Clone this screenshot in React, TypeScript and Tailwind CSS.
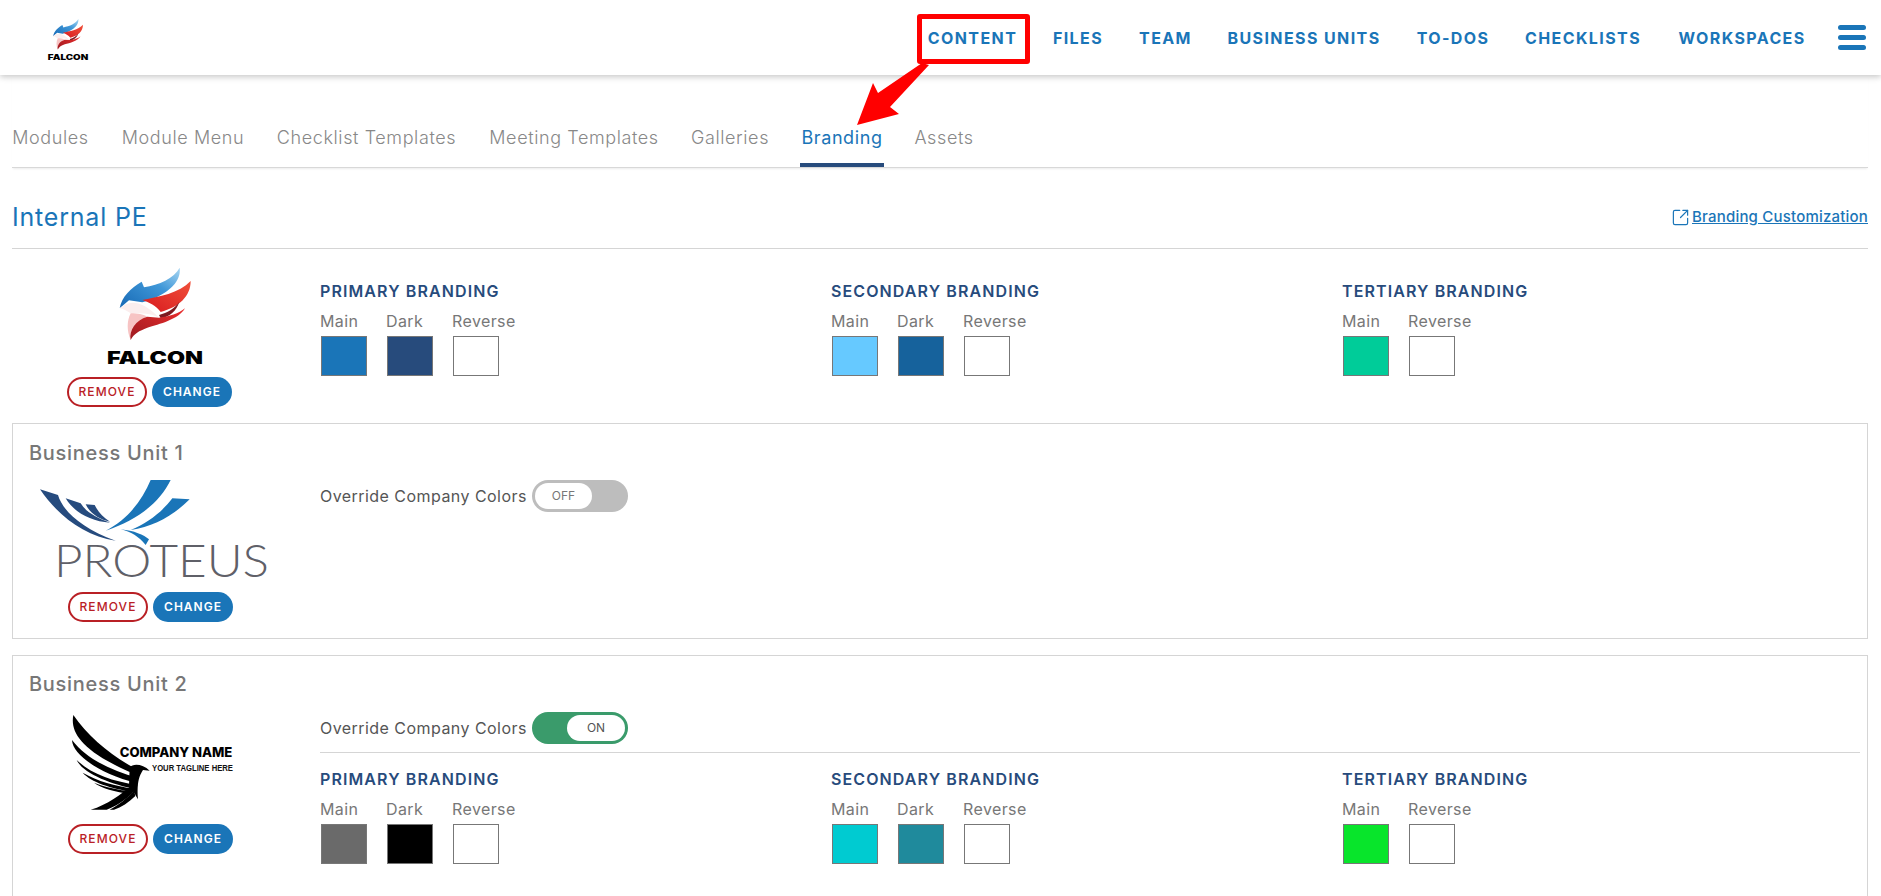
import { SquareArrowOutUpRight } from "lucide-react"

const sans = "font-['Inter','Liberation_Sans',sans-serif]"

const navItems = [
  { label: "CONTENT", cls: "w-[87px]" },
  { label: "FILES", cls: "w-[50px]" },
  { label: "TEAM", cls: "w-[51px]" },
  { label: "BUSINESS UNITS", cls: "w-[152px]" },
  { label: "TO-DOS", cls: "w-[72px]" },
  { label: "CHECKLISTS", cls: "w-[114px]" },
  { label: "WORKSPACES", cls: "w-[130px]" },
]

const tabs = [
  { label: "Modules", cls: "w-[77px]" },
  { label: "Module Menu", cls: "w-[124px]" },
  { label: "Checklist Templates", cls: "w-[179px]" },
  { label: "Meeting Templates", cls: "w-[172px]" },
  { label: "Galleries", cls: "w-[76px]" },
  { label: "Branding", cls: "w-[84px]" },
  { label: "Assets", cls: "w-[56px]" },
]

type Swatch = { label: string; color: string }
type Group = { title: string; swatches: Swatch[] }

const companyGroups: Group[] = [
  {
    title: "PRIMARY BRANDING",
    swatches: [
      { label: "Main", color: "bg-[#1a75b8]" },
      { label: "Dark", color: "bg-[#274b7c]" },
      { label: "Reverse", color: "bg-white" },
    ],
  },
  {
    title: "SECONDARY BRANDING",
    swatches: [
      { label: "Main", color: "bg-[#66c9ff]" },
      { label: "Dark", color: "bg-[#16629c]" },
      { label: "Reverse", color: "bg-white" },
    ],
  },
  {
    title: "TERTIARY BRANDING",
    swatches: [
      { label: "Main", color: "bg-[#00cc99]" },
      { label: "Reverse", color: "bg-white" },
    ],
  },
]

const unitGroups: Group[] = [
  {
    title: "PRIMARY BRANDING",
    swatches: [
      { label: "Main", color: "bg-[#6a6a6a]" },
      { label: "Dark", color: "bg-black" },
      { label: "Reverse", color: "bg-white" },
    ],
  },
  {
    title: "SECONDARY BRANDING",
    swatches: [
      { label: "Main", color: "bg-[#00cbd1]" },
      { label: "Dark", color: "bg-[#1f8a9c]" },
      { label: "Reverse", color: "bg-white" },
    ],
  },
  {
    title: "TERTIARY BRANDING",
    swatches: [
      { label: "Main", color: "bg-[#08e52b]" },
      { label: "Reverse", color: "bg-white" },
    ],
  },
]

function FalconLogo({ className }: { className: string }) {
  return (
    <svg viewBox="0 0 282 300" className={`overflow-visible ${className}`}>
      <defs>
        <linearGradient id="falconBlue" x1="0" y1="1" x2="1" y2="0">
          <stop offset="0" stopColor="#1668b4" />
          <stop offset="0.6" stopColor="#3f97d8" />
          <stop offset="1" stopColor="#a8d6f2" />
        </linearGradient>
        <linearGradient id="falconRed" x1="0" y1="1" x2="1" y2="0">
          <stop offset="0" stopColor="#d81a1f" />
          <stop offset="1" stopColor="#f0503a" />
        </linearGradient>
        <linearGradient id="falconLow" x1="0" y1="1" x2="1" y2="0">
          <stop offset="0" stopColor="#9c1a20" />
          <stop offset="1" stopColor="#ec2c2c" />
        </linearGradient>
      </defs>
      <g transform="translate(34,8)">
        <path d="M181 0 C186 40 152 74 90 98 L69 104 L29 98 L1 122 C7 87 34 62 67 42 L74 59 C119 52 164 32 181 0Z" fill="url(#falconBlue)" />
        <path d="M214 40 C214 86 179 118 124 133 C110 114 90 104 69 97 C119 87 179 77 214 40Z" fill="url(#falconRed)" />
        <path d="M180 102 C165 124 144 134 119 142 L124 152 C150 148 172 130 180 102Z" fill="#7d1a20" />
        <path d="M1 122 C29 95 69 97 119 150 C94 137 69 137 34 137 C24 132 14 124 1 122Z" fill="#fbeeee" />
        <path d="M34 137 C56 137 70 140 84 147 C56 158 40 180 34 217 C22 190 22 160 34 137Z" fill="#f7c4c4" />
        <path d="M197 122 C179 155 119 170 84 180 C59 190 44 197 34 217 C29 187 49 157 84 147 L119 150 C149 147 179 137 197 122Z" fill="url(#falconLow)" />
      </g>
      <text x="141" y="297" textAnchor="middle" textLength="288" lengthAdjust="spacingAndGlyphs" fontFamily="Inter, Liberation Sans, sans-serif" fontWeight="900" fontSize="52" fill="#000">
        FALCON
      </text>
    </svg>
  )
}

function ProteusLogo() {
  return (
    <svg viewBox="4 0 714 300" className="h-[100px] w-[238px] overflow-visible">
      <path d="M28 28 L82 45 C95 90 150 145 255 182 C160 168 80 105 28 28Z" fill="#264b7e" />
      <path d="M105 55 L150 70 C165 95 195 112 238 128 C180 124 130 97 105 55Z" fill="#264b7e" />
      <path d="M165 73 L192 75 C202 95 215 110 238 125 C205 118 178 100 165 73Z" fill="#264b7e" />
      <path d="M360 0 L420 0 C385 70 320 120 225 152 C290 120 335 60 360 0Z" fill="#1a75b8" />
      <path d="M425 55 L477 58 C430 105 370 140 300 150 C350 130 395 95 425 55Z" fill="#1a75b8" />
      <path d="M270 148 C310 152 340 165 355 178 L345 195 C325 170 300 155 270 148Z" fill="#1a75b8" />
      <text x="70" y="292" textLength="645" lengthAdjust="spacingAndGlyphs" fontFamily="Lato, sans-serif" fontWeight="300" fontSize="135" fill="#5f6068">
        PROTEUS
      </text>
    </svg>
  )
}

function CompanyLogo() {
  return (
    <svg viewBox="0 0 498 300" className="h-[100px] w-[166px] overflow-visible">
      <g fill="#000">
        <path d="M16 9 C6 60 40 115 185 180 L195 166 C130 130 58 72 16 9Z" />
        <path d="M12 84 C14 130 100 187 205 213 L210 197 C130 177 55 140 12 84Z" />
        <path d="M26 144 C45 185 130 217 205 232 L208 219 C130 207 70 186 26 144Z" />
        <path d="M44 182 C68 210 130 230 195 240 L198 230 C140 222 90 208 44 182Z" />
        <path d="M78 212 C100 228 140 240 190 246 L192 238 C150 234 115 226 78 212Z" />
        <path d="M185 166 C195 154 225 156 245 176 L225 174 C215 191 206 206 210 262 C198 241 193 231 183 221Z" />
        <path d="M68 293 C118 278 160 246 190 221 L205 231 C180 256 160 276 116 293Z" />
        <path d="M125 293 C150 280 178 258 198 236 L202 252 C182 272 160 286 138 293Z" />
      </g>
      <text x="155" y="135" textLength="338" lengthAdjust="spacingAndGlyphs" fontFamily="Inter, sans-serif" fontWeight="800" fontSize="40" fill="#000">
        COMPANY NAME
      </text>
      <text x="252" y="176" textLength="243" lengthAdjust="spacingAndGlyphs" fontFamily="Liberation Sans, sans-serif" fontWeight="700" fontSize="29" fill="#111">
        YOUR TAGLINE HERE
      </text>
    </svg>
  )
}

function LogoButtons() {
  return (
    <div className="mt-3 flex gap-[5px]">
      <button className="flex h-[30px] w-[80px] items-center justify-center rounded-full border-2 border-[#b92025] bg-white text-[12px] font-medium tracking-[1.1px] text-[#b92025]">
        REMOVE
      </button>
      <button className="flex h-[30px] w-[80px] items-center justify-center rounded-full bg-[#1a75b8] text-[12px] font-semibold tracking-[1px] text-white">
        CHANGE
      </button>
    </div>
  )
}

function BrandingGroups({ groups }: { groups: Group[] }) {
  return (
    <div className="grid grid-cols-[repeat(3,511px)]">
      {groups.map((group) => (
        <div key={group.title}>
          <h3 className="text-[16px] leading-[18px] font-semibold tracking-[1.1px] whitespace-nowrap text-[#274b7c]">{group.title}</h3>
          <div className="mt-3 flex">
            {group.swatches.map((swatch) => (
              <div key={swatch.label} className="w-[66px]">
                <div className="text-[16px] leading-[18px] tracking-[0.4px] text-[#777]">{swatch.label}</div>
                <div className={`mt-[6px] ml-px h-[40px] w-[46px] border border-[#777] ${swatch.color}`} />
              </div>
            ))}
          </div>
        </div>
      ))}
    </div>
  )
}

function OverrideToggle({ on }: { on: boolean }) {
  return (
    <div className="flex h-[32px] items-center">
      <span className="w-[212px] text-[16px] tracking-[0.45px] whitespace-nowrap text-[#555]">Override Company Colors</span>
      {on ? (
        <div className="flex h-[32px] w-[96px] items-center justify-end rounded-full bg-[#3a9b6b] p-[3px]">
          <div className="flex h-[26px] w-[58px] items-center justify-center rounded-full bg-white text-[12px] text-[#555]">ON</div>
        </div>
      ) : (
        <div className="flex h-[32px] w-[96px] items-center rounded-full bg-[#bdbdbd] p-[3px]">
          <div className="flex h-[26px] w-[57px] items-center justify-center rounded-full bg-white text-[12px] text-[#777]">OFF</div>
        </div>
      )}
    </div>
  )
}

export default function App() {
  return (
    <div className={`relative h-[896px] w-[1881px] overflow-hidden bg-white ${sans}`}>
      {/* Top bar */}
      <header className="relative z-10 flex h-[75px] items-center justify-between bg-white pr-[15px] pl-[48px] shadow-[0_2px_6px_rgba(0,0,0,0.22)]">
        <FalconLogo className="mt-[2px] h-[42px] w-[40px]" />
        <nav className="flex items-center">
          {navItems.map((item) => (
            <a key={item.label} className={`mr-[37px] flex justify-center text-[16px] font-bold tracking-[1.4px] whitespace-nowrap text-[#1a75b8] ${item.cls}`}>
              {item.label}
            </a>
          ))}
          <div className="-mt-px -ml-[6px] flex w-[28px] flex-col gap-[5px]">
            <span className="h-[5px] rounded-full bg-[#1a75b8]" />
            <span className="h-[5px] rounded-full bg-[#1a75b8]" />
            <span className="h-[5px] rounded-full bg-[#1a75b8]" />
          </div>
        </nav>
      </header>

      <main className="pr-[13px] pl-[12px]">
        {/* Tabs */}
        <div className="flex h-[93px] items-end gap-[32px] border-b border-[#d8d8d8] shadow-[0_2px_2px_-1px_rgba(0,0,0,0.08)]">
          {tabs.map((tab) => (
            <div
              key={tab.label}
              className={`flex justify-center border-b-4 pb-[13px] text-[18px] leading-[25px] font-light tracking-[0.6px] whitespace-nowrap ${tab.cls} ${
                tab.label === "Branding" ? "border-[#274b7c] font-normal text-[#1a75b8]" : "border-transparent text-[#888]"
              }`}
            >
              {tab.label}
            </div>
          ))}
        </div>

        {/* Company heading */}
        <div className="flex h-[81px] items-center justify-between border-b border-[#d5d5d5] pt-[19px]">
          <h1 className="text-[25px] tracking-[0.8px] text-[#1a75b8]">Internal PE</h1>
          <a className="flex items-center gap-[2px] text-[15px] font-medium tracking-[0.2px] text-[#1a75b8]">
            <SquareArrowOutUpRight className="h-[19px] w-[19px]" strokeWidth={1.5} />
            <span className="underline">Branding Customization</span>
          </a>
        </div>

        {/* Company branding */}
        <div className="flex pb-4">
          <div className="flex w-[275px] flex-col items-center pt-4">
            <FalconLogo className="ml-[10px] h-[100px] w-[94px]" />
            <LogoButtons />
          </div>
          <div className="ml-[33px] pt-[33px]">
            <BrandingGroups groups={companyGroups} />
          </div>
        </div>

        {/* Business Unit 1 */}
        <section className="border border-[#d5d5d5] pt-[17px] pr-[7px] pb-4 pl-4">
          <h2 className="text-[20px] leading-[24px] font-medium tracking-[0.7px] text-[#777]">Business Unit 1</h2>
          <div className="mt-[15px] flex">
            <div className="flex w-[243px] flex-col items-center">
              <ProteusLogo />
              <LogoButtons />
            </div>
            <div className="ml-[48px] w-[1540px]">
              <OverrideToggle on={false} />
            </div>
          </div>
        </section>

        {/* Business Unit 2 */}
        <section className="mt-[16px] h-[300px] border border-[#d5d5d5] pt-4 pr-[7px] pl-4">
          <h2 className="text-[20px] leading-[24px] font-medium tracking-[0.7px] text-[#777]">Business Unit 2</h2>
          <div className="mt-4 flex">
            <div className="flex w-[243px] flex-col items-center">
              <CompanyLogo />
              <LogoButtons />
            </div>
            <div className="ml-[48px] w-[1540px]">
              <OverrideToggle on />
              <div className="mt-2 border-t border-[#d5d5d5] pt-[17px]">
                <BrandingGroups groups={unitGroups} />
              </div>
            </div>
          </div>
        </section>
      </main>

      {/* Annotation laid over the page */}
      <div className="absolute top-[14px] left-[917px] z-20 h-[50px] w-[113px] rounded-[3px] border-[5px] border-[#ff0000]" />
      <svg className="absolute top-[60px] left-[850px] z-20 h-[70px] w-[85px]" viewBox="850 60 85 70">
        <polygon points="929,65 922,63 878,93 873,83 857,125 899,114 890,107" fill="#ff0000" />
      </svg>
    </div>
  )
}
